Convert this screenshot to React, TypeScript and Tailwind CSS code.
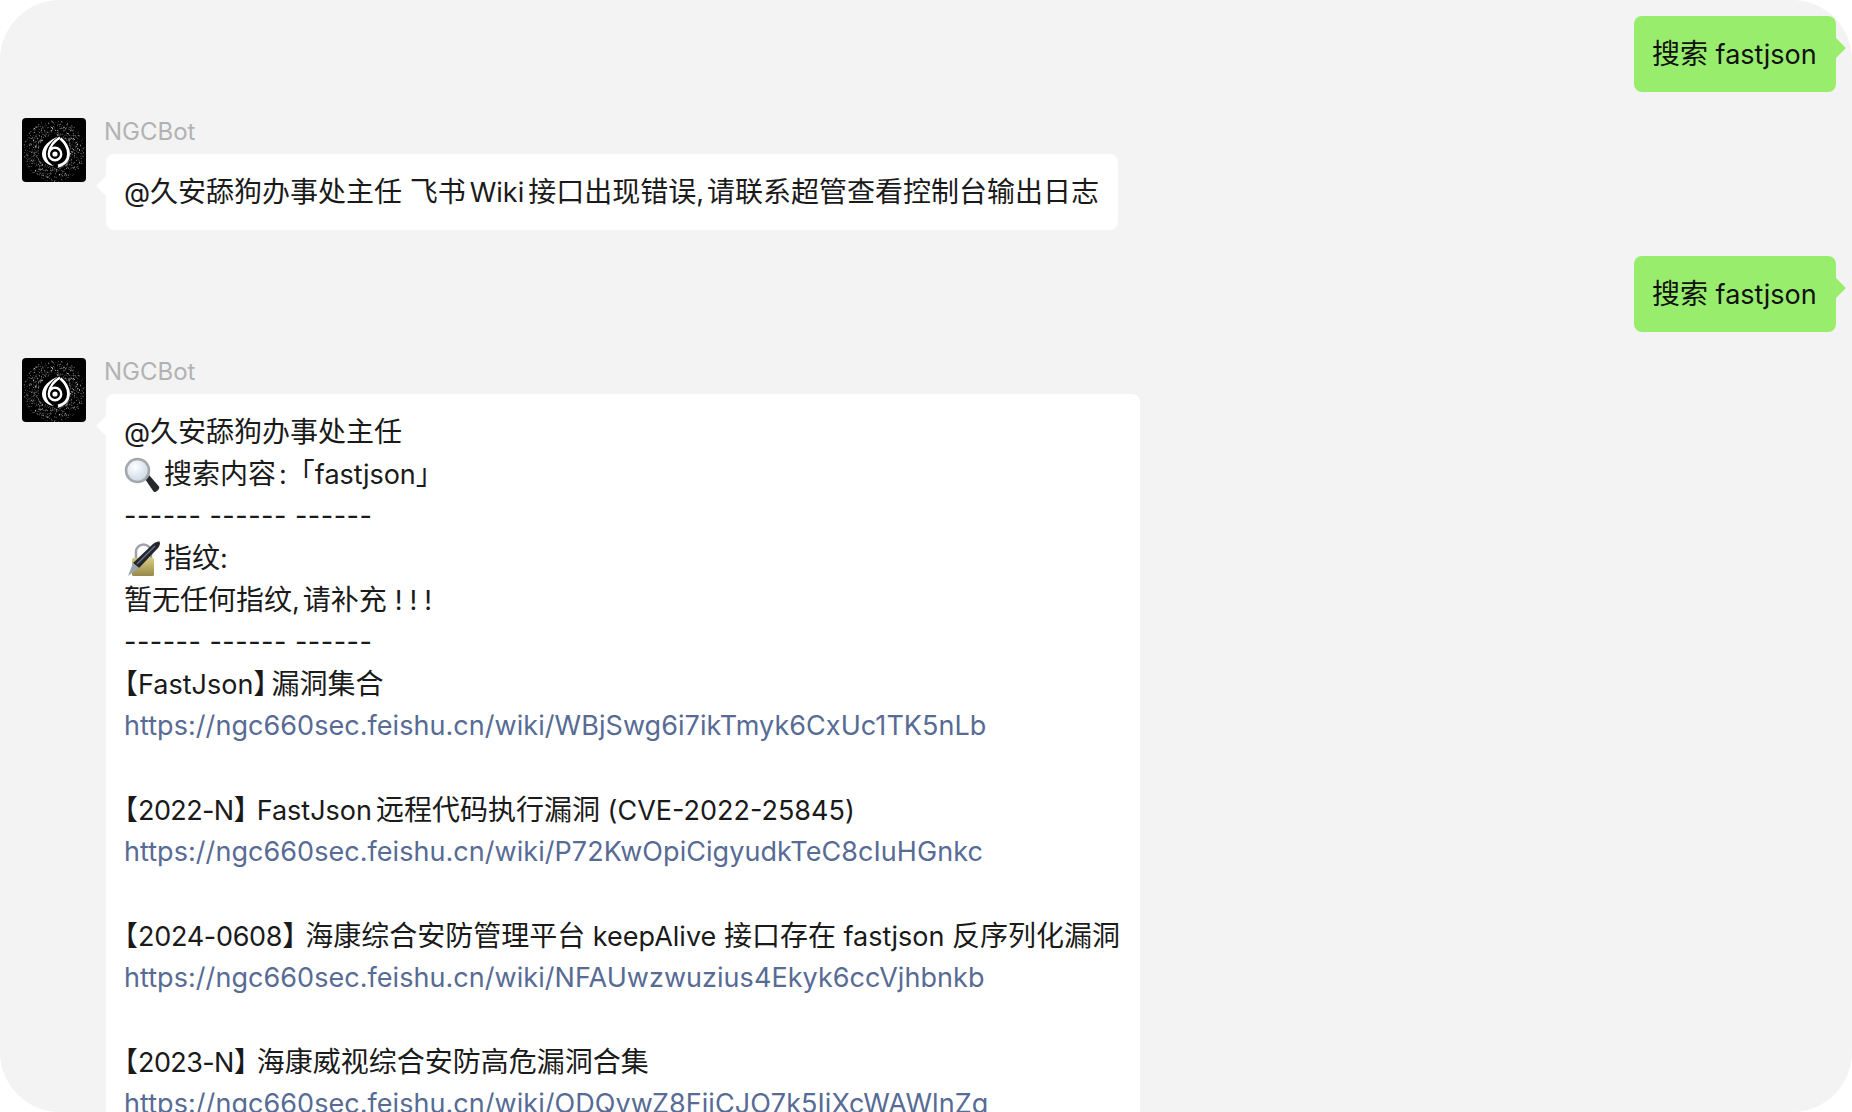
const font = "font-['Inter','Noto_Sans_CJK_SC',sans-serif]";

const dots: { x: number; y: number; r: number; o: number }[] = [];
let seed = 11;
const rnd = () => {
  seed = (seed * 16807) % 2147483647;
  return seed / 2147483647;
};
for (let i = 0; i < 760; i++) {
  const a = rnd() * Math.PI * 2;
  const d = 16 + Math.pow(rnd(), 1.1) * 15;
  dots.push({ x: 32.5 + Math.cos(a) * d, y: 33 + Math.sin(a) * d, r: 0.2 + rnd() * 0.35, o: 0.4 + rnd() * 0.6 });
}

function Avatar() {
  return (
    <svg width="64" height="64" viewBox="0 0 64 64" className="shrink-0">
      <rect width="64" height="64" rx="4" fill="#000" />
      {dots.map((d, i) => (
        <circle key={i} cx={d.x} cy={d.y} r={d.r} fill="#fff" opacity={d.o} />
      ))}
      <path d="M36 18.500C28 22 20 28 20 36c0 6 5 11.500 12 12-4.500-2.500-8-6.500-8-12 0-7 5.500-12.500 12-17.500z" fill="#fff" />
      <circle cx="33" cy="36" r="6.200" fill="none" stroke="#fff" strokeWidth="2.400" />
      <path d="M38 19.500c-5 3-10 8.500-11 15" fill="none" stroke="#fff" strokeWidth="2.400" />
      <path d="M38.500 20.500c4.500 4 8 9 8 15.500 0 6-4.500 11-10.500 12" fill="none" stroke="#fff" strokeWidth="2.800" />
      <circle cx="33" cy="36" r="2.600" fill="#fff" />
    </svg>
  );
}

// CJK runs sit a pixel larger than the latin text around them
function C({ children }: { children: string }) {
  return <span className="text-[28px]">{children}</span>;
}

function Sent() {
  return (
    <div className="flex justify-end pr-4">
      <div className="relative h-[76px] w-[202px] whitespace-nowrap rounded-lg bg-[#98ee6c] px-[18px] leading-[76px] text-[#111]">
        <C>搜索</C> fastjson
        <span className="absolute right-[-7px] top-[25px] h-[14px] w-[14px] rotate-45 bg-[#98ee6c]" />
      </div>
    </div>
  );
}

function Received({ width, children }: { width: string; children: React.ReactNode }) {
  return (
    <div className="flex pl-[22px]">
      <Avatar />
      <div className="ml-[18px] min-w-0">
        <div className="h-9 text-[24px] leading-[28px] text-[#b2b2b2]">NGCBot</div>
        <div className={`relative ml-0.5 rounded-lg bg-white px-[18px] py-[17px] leading-[42px] text-[#1a1a1a] ${width}`}>
          <span className="absolute left-[-7px] top-[25px] h-[14px] w-[14px] rotate-45 bg-white" />
          {children}
        </div>
      </div>
    </div>
  );
}

function Line({ children }: { children?: React.ReactNode }) {
  return <div className="h-[42px] whitespace-nowrap">{children}</div>;
}

function Link({ children }: { children: string }) {
  return <div className="h-[42px] whitespace-nowrap tracking-[0.05px] text-[#576b95]">{children}</div>;
}

function Open() {
  return <span className="text-[28px] [font-feature-settings:'halt']">【</span>;
}

function Close({ tight }: { tight?: boolean }) {
  return <span className={`text-[28px] [font-feature-settings:'halt'] ${tight ? 'mr-1' : 'mr-[9px]'}`}>】</span>;
}

function Num({ children }: { children: string }) {
  return <span className="tracking-[-0.6px]">{children}</span>;
}

function Comma() {
  return <span className="mr-[3px]">,</span>;
}

function MagnifierIcon() {
  return (
    <svg width="36" height="36" viewBox="0 0 36 36" className="mr-1 inline-block align-[-9px]">
      <defs>
        <radialGradient id="lens" cx="40%" cy="35%" r="65%">
          <stop offset="0" stopColor="#ffffff" />
          <stop offset="1" stopColor="#c9d8e6" />
        </radialGradient>
      </defs>
      <path d="M21 22l4-4 10 11.500c1.500 2-3.500 7-5.500 5z" fill="#26282c" />
      <circle cx="13.500" cy="13.500" r="11.500" fill="url(#lens)" stroke="#a3a8ad" strokeWidth="2.500" />
    </svg>
  );
}

function LockPenIcon() {
  return (
    <svg width="36" height="36" viewBox="0 0 36 36" className="mr-1 inline-block align-[-9px]">
      <defs>
        <linearGradient id="lockBody" x1="0" y1="0" x2="0" y2="1">
          <stop offset="0" stopColor="#d9cb7c" />
          <stop offset="1" stopColor="#97894a" />
        </linearGradient>
      </defs>
      <path d="M12 17v-6a7.500 7.500 0 0 1 15 0v6" fill="none" stroke="#a0a4a6" strokeWidth="2.500" />
      <rect x="8" y="17" width="22" height="18" rx="1.500" fill="url(#lockBody)" />
      <path d="M35.500 .5c1 2.500 0 4.500-1.500 6.500L15 27l-6-5L29 3c2-1.500 4.500-2.800 6.500-2.500z" fill="#23262c" />
      <path d="M31 5L13 23" stroke="#6a7886" strokeWidth="1.200" />
      <path d="M9 22l6 5-11 8z" fill="#9aa6ad" />
    </svg>
  );
}

export default function App() {
  return (
    <div className="h-[1112px] w-full overflow-hidden bg-white">
      <div className={`flex h-full flex-col gap-[26px] rounded-[60px] bg-[#f3f3f3] pt-4 text-[27px] ${font}`}>
        <Sent />
        <Received width="w-[1012px]">
          <Line>
            @<C>久安舔狗办事处主任</C> <C>飞书</C><span className="mx-1">Wiki</span><C>接口出现错误</C><Comma /><C>请联系超管查看控制台输出日志</C>
          </Line>
        </Received>
        <Sent />
        <Received width="w-[1034px]">
          <Line>@<C>久安舔狗办事处主任</C></Line>
          <Line>
            <MagnifierIcon />
            <C>搜索内容</C><span className="ml-[3px]">:</span><C>「</C>fastjson<C>」</C>
          </Line>
          <Line><span className="tracking-[0.48px]">------ ------ ------</span></Line>
          <Line>
            <LockPenIcon />
            <C>指纹</C>:
          </Line>
          <Line><C>暂无任何指纹</C><Comma /><C>请补充</C><span className="ml-2 tracking-[7px]">!!!</span></Line>
          <Line><span className="tracking-[0.48px]">------ ------ ------</span></Line>
          <Line><Open />FastJson<Close tight /><C>漏洞集合</C></Line>
          <Link>https://ngc660sec.feishu.cn/wiki/WBjSwg6i7ikTmyk6CxUc1TK5nLb</Link>
          <Line />
          <Line><Open /><Num>2022-N</Num><Close />FastJson<span className="ml-1"><C>远程代码执行漏洞</C></span> (CVE-2022-25845)</Line>
          <Link>https://ngc660sec.feishu.cn/wiki/P72KwOpiCigyudkTeC8cIuHGnkc</Link>
          <Line />
          <Line><Open /><span className="tracking-[-0.3px]">2024-0608</span><Close /><C>海康综合安防管理平台</C> keepAlive <C>接口存在</C> fastjson <C>反序列化漏洞</C></Line>
          <Link>https://ngc660sec.feishu.cn/wiki/NFAUwzwuzius4Ekyk6ccVjhbnkb</Link>
          <Line />
          <Line><Open /><Num>2023-N</Num><Close /><C>海康威视综合安防高危漏洞合集</C></Line>
          <Link>https://ngc660sec.feishu.cn/wiki/ODQvwZ8FijCJO7k5IiXcWAWlnZg</Link>
        </Received>
      </div>
    </div>
  );
}
